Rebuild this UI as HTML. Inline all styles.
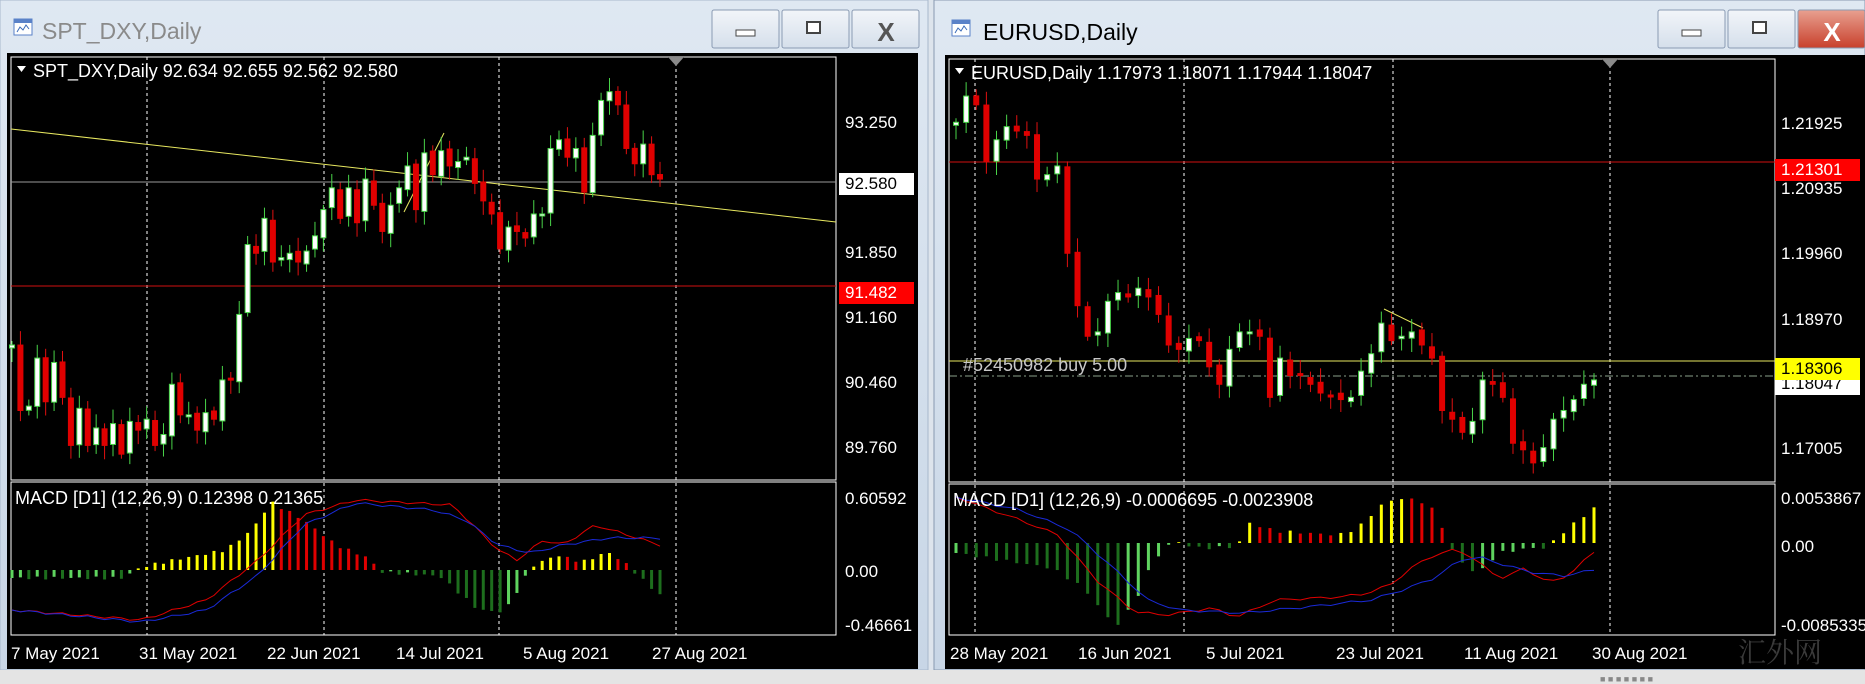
<!DOCTYPE html>
<html><head><meta charset="utf-8"><style>
html,body{margin:0;padding:0;width:1865px;height:684px;overflow:hidden;background:#dde4ec;font-family:"Liberation Sans","Noto Sans CJK SC",sans-serif}
svg{position:absolute;left:0;top:0}
</style></head><body>
<svg id="s" width="1865" height="684" xmlns="http://www.w3.org/2000/svg" font-family="Liberation Sans, sans-serif">
<defs>
<linearGradient id="tb" x1="0" y1="0" x2="0" y2="1"><stop offset="0" stop-color="#dfe8f2"/><stop offset="1" stop-color="#c8d6e6"/></linearGradient>
<linearGradient id="bt" x1="0" y1="0" x2="0" y2="1"><stop offset="0" stop-color="#f2f5f9"/><stop offset="1" stop-color="#d5dfeb"/></linearGradient>
<linearGradient id="cl" x1="0" y1="0" x2="0" y2="1"><stop offset="0" stop-color="#e8a090"/><stop offset="1" stop-color="#c8402c"/></linearGradient>
</defs>
<rect x="0" y="0" width="1865" height="684" fill="#dde4ec"/>
<rect x="0" y="0" width="928" height="670" fill="url(#tb)" stroke="#a8b8cc"/>
<rect x="7" y="53" width="911" height="616" fill="#000"/>
<rect x="934" y="0" width="931" height="670" fill="url(#tb)" stroke="#8899b0"/>
<rect x="945" y="55" width="920" height="614" fill="#000"/>
<rect x="0" y="670" width="1865" height="14" fill="#e4e4e4"/>
<text x="1600" y="682" font-size="9" fill="#888">■ ■ ■ ■ ■ ■ ■</text>
<g id="g"></g>
</svg>
<script>
const NS="http://www.w3.org/2000/svg",G=document.getElementById('g');
function el(t,a,txt){const e=document.createElementNS(NS,t);for(const k in a)e.setAttribute(k,a[k]);if(txt!==undefined)e.textContent=txt;G.appendChild(e);return e;}
function interp(keys,n){const r=[];for(let i=0;i<n;i++){const t=i/(n-1);let j=0;while(j<keys.length-2&&keys[j+1][0]<t)j++;const a=keys[j],b=keys[j+1];const f=Math.max(0,Math.min(1,(t-a[0])/(b[0]-a[0])));r.push(a[1]+(b[1]-a[1])*f);}return r;}
function icon(x,y){el('rect',{x:x,y:y,width:18,height:16,fill:'#fff',stroke:'#5a82c8'});el('rect',{x:x,y:y,width:18,height:4,fill:'#5a82c8'});el('path',{d:`M${x+3} ${y+13}l3-5 3 3 3-5 3 4`,stroke:'#3a6ab8',fill:'none'});}
function buttons(x0,active){for(let i=0;i<3;i++){const x=x0+i*70;el('rect',{x:x,y:10,width:67,height:38,rx:2,fill:(i==2&&active)?'url(#cl)':'url(#bt)',stroke:'#8a9bb3'});}
el('rect',{x:x0+24,y:30,width:19,height:6,fill:'#fff',stroke:'#444'});
el('rect',{x:x0+95,y:22,width:13,height:11,fill:'#fff',stroke:'#444','stroke-width':2});
el('text',{x:x0+174,y:41,'font-size':26,'font-weight':'bold',fill:active?'#fff':'#555','text-anchor':'middle'},'X');}
function chart(o){
 const {x0,x1,top,mainB,macdB,axisX,right}=o;
 el('rect',{x:x0,y:top,width:x1-x0,height:mainB-top,fill:'none',stroke:'#fff'});
 el('rect',{x:x0,y:mainB+2,width:x1-x0,height:macdB-mainB-2,fill:'none',stroke:'#fff'});
 o.vl.forEach(x=>el('line',{x1:x,y1:top,x2:x,y2:macdB,stroke:'#fff','stroke-dasharray':'3,3','stroke-width':1}));
 el('path',{d:`M${o.vl[3]-8} ${top}h16l-8 9z`,fill:'#8a8a8a'});
 o.lines.forEach(l=>el('line',l));
 const c=o.closes,n=c.length;
 for(let i=0;i<n;i++){const x=o.cx0+(o.cx1-o.cx0)*i/(n-1);const cl=c[i],op=i?c[i-1]+(Math.sin(i*3.1)*2):cl+3;
  const hi=Math.min(cl,op)-4-Math.abs(Math.sin(i*1.7))*10,lo=Math.max(cl,op)+4+Math.abs(Math.cos(i*2.3))*10;
  const bull=cl<op;const col=bull?'#49d449':'#e01010';
  el('line',{x1:x,y1:hi,x2:x,y2:lo,stroke:col});
  const t=Math.min(cl,op),h=Math.max(2,Math.abs(cl-op));
  el('rect',{x:x-2.5,y:t,width:5,height:h,fill:bull?'#fff':'#e00000',stroke:bull?'#49d449':'#e00000','stroke-width':1});}
 const hv=interp(o.hist,n);
 for(let i=0;i<n;i++){const x=o.cx0+(o.cx1-o.cx0)*i/(n-1);const v=hv[i]+Math.sin(i*2.7)*1.5,p=i?hv[i-1]:v;let col;
  if(v>=0)col=v>=p?'#ffff00':'#e00000';else col=v>=p?'#5fd45f':'#1d6e1d';
  el('line',{x1:x,y1:o.zero,x2:x,y2:o.zero-v,stroke:col,'stroke-width':3});}
 const mk=(k,col)=>{const v=interp(k,n);el('polyline',{points:v.map((y,i)=>`${(o.cx0+(o.cx1-o.cx0)*i/(n-1)).toFixed(1)},${(y+Math.sin(i*1.9)*1.2).toFixed(1)}`).join(' '),fill:'none',stroke:col,'stroke-width':1});};
 mk(o.red,'#e00000');mk(o.blue,'#1a2ad8');
 o.labels.forEach(l=>{if(l[2]){el('rect',{x:axisX-6,y:l[1]-16,width:right-axisX+4,height:22,fill:l[2]});}
  el('text',{x:axisX,y:l[1],'font-size':17,fill:l[3]||'#fff'},l[0]);});
 o.dates.forEach(d=>el('text',{x:d[1],y:659,'font-size':17,fill:'#fff'},d[0]));
 el('path',{d:`M${x0+6} ${top+9}h9l-4.5 6z`,fill:'#fff'});
 el('text',{x:x0+22,y:top+20,'font-size':18,fill:'#fff','xml:space':'preserve'},o.head);
 el('text',{x:x0+4,y:mainB+24,'font-size':18,fill:'#fff'},o.mhead);
}
icon(14,19);el('text',{x:42,y:39,'font-size':23,fill:'#8a8a8a'},'SPT_DXY,Daily');buttons(712,false);
icon(952,20);el('text',{x:983,y:40,'font-size':23,fill:'#000'},'EURUSD,Daily');buttons(1658,true);
const Lz=[790,940,930,820,920,830,910,1020,935,1020,980,1020,970,1040,965,985,960,1020,995,880,950,950,985,945,960,870,870,720,560,580,500,600,590,580,600,575,540,480,430,500,430,510,410,470,530,470,430,380,480,350,400,345,380,370,360,420,460,490,570,520,530,545,490,490,340,320,360,340,440,310,230,210,240,340,375,330,400,410];
chart({x0:11,x1:836,top:57,mainB:480,macdB:635,axisX:845,right:916,vl:[147,324,499,676],
 lines:[{x1:11,y1:182,x2:836,y2:182,stroke:'#9a9a9a'},{x1:11,y1:286,x2:836,y2:286,stroke:'#d01010'},{x1:11,y1:129,x2:836,y2:222,stroke:'#e8e860'},{x1:404,y1:212,x2:444,y2:133,stroke:'#e8e860'}],
 closes:Lz.map(z=>z/2.29),cx0:12,cx1:660,zero:570,
 hist:[[0,-8],[0.17,-8],[0.2,3],[0.25,10],[0.33,20],[0.37,40],[0.4,68],[0.45,50],[0.5,25],[0.55,12],[0.57,-2],[0.66,-6],[0.72,-40],[0.76,-42],[0.79,-10],[0.8,3],[0.84,15],[0.88,8],[0.92,18],[0.95,5],[0.97,-8],[1,-25]],
 red:[[0,610],[0.2,620],[0.3,600],[0.38,560],[0.45,515],[0.53,500],[0.68,505],[0.75,550],[0.78,560],[0.82,540],[0.85,545],[0.9,525],[0.95,535],[1,545]],
 blue:[[0,610],[0.2,622],[0.3,610],[0.38,575],[0.45,525],[0.53,503],[0.65,510],[0.7,520],[0.75,545],[0.8,553],[0.85,545],[0.92,538],[1,538]],
 labels:[['93.250',128],['92.580',189,'#fff','#000'],['91.850',258],['91.482',298,'#ff0000'],['91.160',323],['90.460',388],['89.760',453],['0.60592',504],['0.00',577],['-0.46661',631]],
 dates:[['7 May 2021',11],['31 May 2021',139],['22 Jun 2021',267],['14 Jul 2021',396],['5 Aug 2021',523],['27 Aug 2021',652]],
 head:'SPT_DXY,Daily  92.634 92.655 92.562 92.580',mhead:'MACD [D1] (12,26,9) 0.12398 0.21365'});
const Rz=[280,220,240,370,320,290,300,310,410,400,380,580,700,770,760,690,670,680,660,680,720,790,800,775,780,840,880,800,760,760,770,910,820,860,860,880,900,905,915,910,850,810,740,780,770,760,790,820,940,960,990,965,870,880,910,1015,1030,1060,1025,960,940,915,880,870];
chart({x0:949,x1:1775,top:59,mainB:482,macdB:635,axisX:1781,right:1862,vl:[975,1184,1393,1610],
 lines:[{x1:949,y1:162,x2:1775,y2:162,stroke:'#d01010'},{x1:949,y1:361,x2:1775,y2:361,stroke:'#e8e860'},{x1:949,y1:376,x2:1775,y2:376,stroke:'#8aa08a','stroke-dasharray':'8,3,2,3'},{x1:1384,y1:309,x2:1423,y2:328,stroke:'#e8e860'}],
 closes:Rz.map(z=>z/2.29),cx0:956,cx1:1594,zero:543,
 hist:[[0,-10],[0.15,-25],[0.2,-45],[0.25,-84],[0.28,-60],[0.3,-30],[0.32,-10],[0.34,2],[0.38,-5],[0.44,-4],[0.46,20],[0.5,12],[0.6,8],[0.63,15],[0.67,40],[0.7,45],[0.74,40],[0.76,20],[0.77,0],[0.8,-25],[0.82,-30],[0.85,-10],[0.9,-5],[0.93,-5],[0.94,5],[0.96,15],[1,35]],
 red:[[0,497],[0.1,520],[0.16,535],[0.22,580],[0.28,612],[0.33,615],[0.4,608],[0.44,617],[0.5,600],[0.6,597],[0.64,594],[0.68,585],[0.72,565],[0.75,555],[0.78,550],[0.8,553],[0.84,573],[0.86,578],[0.89,568],[0.93,583],[0.96,575],[1,552]],
 blue:[[0,497],[0.1,510],[0.18,530],[0.25,570],[0.3,600],[0.35,610],[0.45,613],[0.55,607],[0.65,600],[0.7,590],[0.75,578],[0.79,560],[0.82,557],[0.86,565],[0.9,572],[0.95,576],[1,570]],
 labels:[['1.21925',129],['1.20935',194],['1.21301',175,'#ff0000'],['1.19960',259],['1.18970',325],['1.18047',389,'#fff','#000'],['1.18306',374,'#ffff00','#000'],['1.17005',454],['0.0053867',504],['0.00',552],['-0.0085335',631]],
 dates:[['28 May 2021',950],['16 Jun 2021',1078],['5 Jul 2021',1206],['23 Jul 2021',1336],['11 Aug 2021',1464],['30 Aug 2021',1592]],
 head:'EURUSD,Daily  1.17973 1.18071 1.17944 1.18047',mhead:'MACD [D1] (12,26,9) -0.0006695 -0.0023908'});
el('text',{x:963,y:371,'font-size':18,fill:'#c8c8c8'},'#52450982 buy 5.00');
el('text',{x:1738,y:662,'font-size':28,fill:'#3a3a3a','font-family':'Noto Serif CJK SC, serif'},'汇外网');
</script>
</body></html>
